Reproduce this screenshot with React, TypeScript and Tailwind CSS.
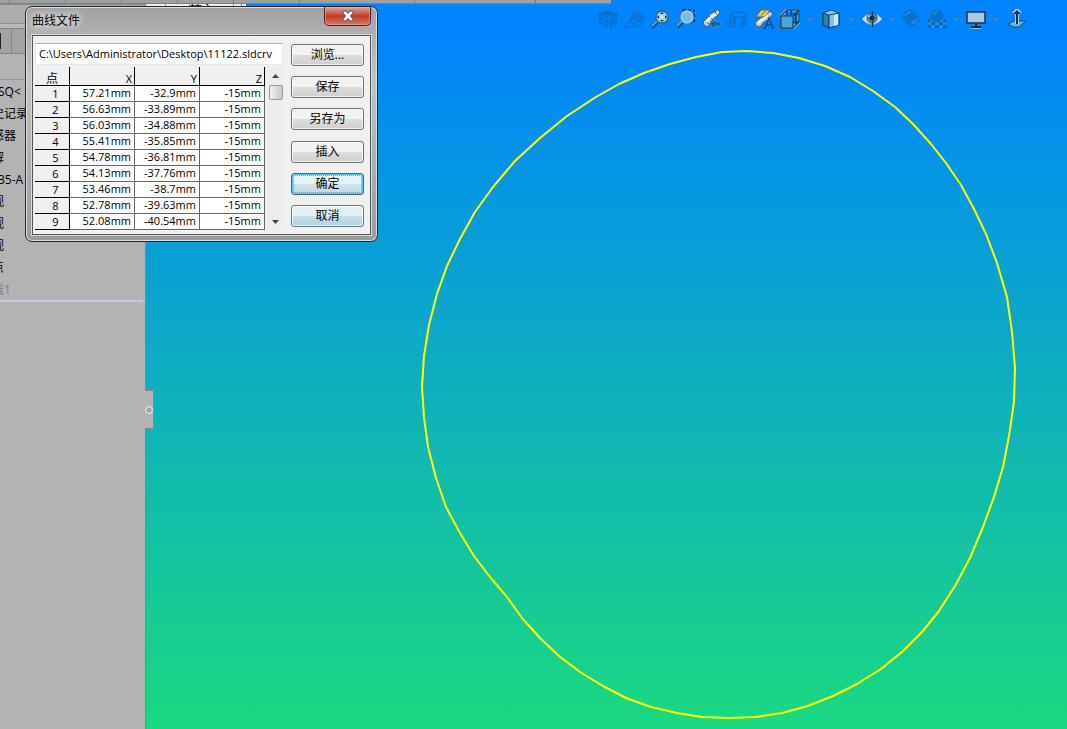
import { ReactNode } from 'react';

const rows = [
  ['57.21mm', '-32.9mm', '-15mm'],
  ['56.63mm', '-33.89mm', '-15mm'],
  ['56.03mm', '-34.88mm', '-15mm'],
  ['55.41mm', '-35.85mm', '-15mm'],
  ['54.78mm', '-36.81mm', '-15mm'],
  ['54.13mm', '-37.76mm', '-15mm'],
  ['53.46mm', '-38.7mm', '-15mm'],
  ['52.78mm', '-39.63mm', '-15mm'],
  ['52.08mm', '-40.54mm', '-15mm'],
];

const treeItems = ['SQ<', '史记录', '感器', '解', '35-A', '视', '视', '视', '点'];

const curve =
  '747,51 773,53 799,58 825,66 850,77 873,91 895,107 913,124 931,144 946,163 961,185 974,209 986,234 997,263 1007,297 1012,332 1015,368 1014,402 1009,436 1003,467 994,497 983,527 970,558 955,586 939,611 922,632 902,652 881,669 857,684 833,696 808,706 782,713 756,717 729,718 702,717 677,713 651,707 626,698 603,686 580,672 559,656 540,638 522,618 507,597 490,577 474,556 460,533 446,507 436,478 428,447 424,417 422,387 424,356 429,325 437,294 447,266 460,239 475,212 493,187 515,161 540,138 567,116 596,97 619,84 644,73 670,64 696,57 722,52';

function Icon({ children }: { children: ReactNode }) {
  return (
    <svg width="20" height="20" viewBox="0 0 20 20" fill="none" stroke="#174e78" strokeWidth="1">
      {children}
    </svg>
  );
}

function Tool({ label, faded, children }: { label: string; faded?: boolean; children: ReactNode }) {
  return (
    <button type="button" aria-label={label} className={faded ? 'size-5 opacity-50' : 'size-5'}>
      <Icon>{children}</Icon>
    </button>
  );
}

function Caret() {
  return (
    <svg width="5" height="3" viewBox="0 0 5 3" className="shrink-0">
      <path d="M0 0h5L2.5 3z" fill="#6b7f95" />
    </svg>
  );
}

function Toolbar() {
  return (
    <div className="flex items-center pt-[5px] pr-10">
      <div className="flex items-center gap-[6px]">
        <Tool label="工作台" faded>
          <path d="M1 5l8-3 10 3-7 4zM1 5v3l11 4 7-4V5M2 9v6h2v-5M7 11v7h2v-6M12 12v6h2v-7M16 10v5h2V8M4 4l11 3M7 3l10 3M5 7l8-4" />
        </Tool>
        <Tool label="测量" faded>
          <path d="M1 15l6-2V8c0-4 4-6 7-5s5 3 5 7l-2 6-6 2H7l-6 1zM7 13l5 3" />
          <circle cx="13" cy="9" r="4" />
          <circle cx="13" cy="9" r="2" />
        </Tool>
        <Tool label="整屏显示">
          <path d="M2 18l5-5" stroke="#164b70" strokeWidth="4" />
          <path d="M2 17l5-5" stroke="#4ba8d5" strokeWidth="2" />
          <circle cx="12" cy="8" r="6" fill="#a7d5ee" stroke="#42617c" strokeWidth="1.5" />
          <path d="M12 3l2 2h-4zM12 13l2-2h-4zM7 8l2-2v4zM17 8l-2-2v4z" fill="#143957" stroke="none" />
          <path d="M12 7v2M11 8h2" stroke="#e9f8ff" />
        </Tool>
        <Tool label="局部放大">
          <path d="M7 1h11v12H7z" stroke="#10283c" strokeDasharray="3 2" strokeWidth="1.5" />
          <path d="M1 18l5-5" stroke="#164b70" strokeWidth="4" />
          <path d="M1 17l5-5" stroke="#4ba8d5" strokeWidth="2" />
          <circle cx="11" cy="8" r="6" fill="#79bce4" stroke="#b5dff4" strokeWidth="1.5" />
          <circle cx="11" cy="8" r="6.5" stroke="#466988" strokeWidth="0.5" />
        </Tool>
        <Tool label="上一视图">
          <path d="M1 13l5-5 2-3 6-3 2-2 2 4-3 3-5 4-4 7-4-2z" fill="#c6d3dc" stroke="#4f5961" />
          <path d="M3 12l5 4M7 7l4 4M13 3l3 4" stroke="#505a62" />
          <path d="M4 13l5-5 5-3" stroke="#f2f5f7" strokeWidth="2" />
          <path d="M8 15l5-5v3h6v4h-6v3z" fill="#12618e" stroke="#5bb5dc" strokeWidth="0.5" />
        </Tool>
        <Tool label="剖面视图" faded>
          <path d="M2 6q2-3 8-3t8 3v9l-4 2V9q-2-2-7-1v9l-5 1zM2 6l5 2M14 9l4-3M2 12l4-4M2 16l5-5M14 13l4-4M14 16l4-4" />
        </Tool>
        <Tool label="动态注解">
          <path d="M7 1h9l-5 7H2z" fill="#d8e47b" stroke="#6d6230" />
          <path d="M4 8l7-6M7 8l6-7" stroke="#c07142" />
          <path d="M1 14l5-5 4-1 6-6 3 3-5 6-4 2-4 5-4-1z" fill="#bccbd5" stroke="#4d5d69" />
          <path d="M4 14l10-8" stroke="#f2f7f9" strokeWidth="2" />
          <path d="M11 19l4-10 4 10M12 16h6M9 19h3M17 19h3" stroke="#154b77" strokeWidth="1.5" />
        </Tool>
        <Tool label="视图定向">
          <path d="M1 7l6-6h12v12l-6 6H1z" stroke="#9dd8f1" strokeWidth="3" />
          <path d="M1 7l6-6h12v12l-6 6H1zM7 1v5M19 1l-6 6M13 13h6M13 5h5M11 1v5M16 4v11" stroke="#173e60" strokeWidth="1.5" />
          <path d="M1 7h12v12H1z" fill="#43a9dc" stroke="#163d5d" />
        </Tool>
      </div>
      <div className="ml-2 flex items-center gap-2">
        <Caret />
        <Tool label="显示样式">
          <path d="M2 4l8-3 8 3v12l-10 3-6-3z" fill="#8acbed" stroke="#244b67" />
          <path d="M2 4l6 2v13l-6-3z" fill="#2684b3" stroke="#183e5b" />
          <path d="M8 6l10-2v12L8 19z" fill="#79c4ee" stroke="#183e5b" />
          <path d="M13 6l4-1v11l-4 1z" fill="#d0e8f5" stroke="none" />
        </Tool>
        <Caret />
        <Tool label="隐藏/显示项目">
          <path d="M0 10C5 3 15 3 20 10 15 17 5 17 0 10z" fill="#c5dcea" stroke="#7ca7c5" />
          <circle cx="10" cy="9" r="5" fill="#5488ac" stroke="#285273" />
          <circle cx="10" cy="9" r="2.5" fill="#142331" stroke="none" />
          <path d="M10.500 2v16" stroke="#1e3446" />
          <path d="M6 7h2" stroke="white" />
        </Tool>
        <Caret />
      </div>
      <div className="ml-[6px] flex items-center gap-[6px]">
        <Tool label="编辑外观" faded>
          <circle cx="9" cy="8" r="7" fill="#0b659f" stroke="#0b659f" />
          <path d="M4 7q2-4 6-4" stroke="#78bae4" />
          <path d="M8 18l1-5 7-6 3 4-7 6zM9 13l3 4M14 9l3 4" fill="#328bc1" />
        </Tool>
        <Tool label="应用布景" faded>
          <path d="M1 9h18v10H1z" fill="#4a9acc" stroke="#2879aa" />
          <path d="M1 10h3v3H1zM4 13h4v3H4zM8 16h4v3H8zM12 13h4v3h-4zM16 10h3v3h-3zM1 16h3v3H1zM16 16h3v3h-3z" fill="#0a4b79" stroke="none" />
          <circle cx="10" cy="7" r="6" fill="#0c629a" stroke="#0c629a" />
          <path d="M6 6q1-3 4-3" stroke="#78bae4" />
        </Tool>
      </div>
      <div className="ml-[6px] flex items-center gap-2">
        <Caret />
        <Tool label="视图设定">
          <path d="M1 3h18v11H1z" fill="#a9c8e2" stroke="#203246" strokeWidth="1.5" />
          <path d="M10 15v3M5 18h10" stroke="#162e43" strokeWidth="2" />
          <path d="M5 19.500h10" stroke="#79c6ef" />
        </Tool>
        <Caret />
        <Tool label="基准面">
          <path d="M1 15l6-3h12l-7 6H6z" fill="#61b7d5" stroke="#164a68" />
          <path d="M10 15V2M7 5l3-4 3 4" stroke="#a7d3f2" strokeWidth="4" />
          <path d="M10 15V3" stroke="#1a3045" strokeWidth="2" />
          <path d="M6 5l4-4 4 4z" fill="#1a3045" stroke="none" />
        </Tool>
      </div>
    </div>
  );
}

function Sidebar() {
  return (
    <aside className="w-[146px] shrink-0 border-r border-[#858585] bg-[#b3b3b3] text-xs text-black">
      <div className="h-5 border-t border-b border-t-[#7a9296] border-b-[#909090] bg-[#adadad]" />
      <div className="h-[5px] border-b border-[#858585] bg-[#b8b8b8]" />
      <div className="flex h-[25px] items-center border-b border-[#858585] bg-[#a3a3a3]">
        <span className="h-4 w-px bg-[#222]" />
        <span className="ml-[10px] h-full w-px bg-[#858585]" />
      </div>
      <div className="h-[26px] border-b border-[#999]" />
      <ul className="pt-px">
        {treeItems.map((item, i) => (
          <li key={i} className="flex h-[22px] items-center overflow-hidden whitespace-nowrap">
            <span className={/^[\x00-\x7f]+$/.test(item) ? '-ml-0.5' : '-ml-2'}>{item}</span>
          </li>
        ))}
        <li className="flex h-[21px] items-center overflow-hidden text-[#7d7d7d]">
          <span className="-ml-2">线1</span>
        </li>
      </ul>
      <div className="mr-0.5 h-0.5 bg-[#c6c6e5]" />
    </aside>
  );
}

const buttonBase = 'h-[22px] w-full rounded-[3px] border text-xs leading-none shadow-[inset_0_0_0_1px_#ffffffb0]';
const plain = `${buttonBase} border-[#707070] bg-linear-to-b from-[#f2f2f2] from-50% via-[#dddddd] via-50% to-[#cfcfcf]`;

function CurveDialog() {
  return (
    <section
      role="dialog"
      aria-labelledby="dialog-title"
      className="absolute top-[6px] left-[25px] w-[353px] rounded-[7px] border border-[#272727] bg-linear-to-b from-[#a2a2a2] via-[#c4c4c4] via-30% to-[#9b9b9b] px-[6px] pb-[6px] text-black shadow-[inset_0_0_0_1px_#dedede]"
    >
      <header className="flex h-7 items-start justify-between">
        <h1 id="dialog-title" className="pt-[6px] text-xs leading-4 [text-shadow:0_0_8px_white,0_0_8px_white]">
          曲线文件
        </h1>
        <button
          type="button"
          aria-label="关闭"
          className="flex h-[19px] w-[47px] items-center justify-center rounded-b-[5px] border border-t-0 border-[#53201b] bg-linear-to-b from-[#e0a79d] via-[#bd3b25] via-50% to-[#d97866] shadow-[inset_0_0_0_1px_#eeb4a580]"
        >
          <svg width="14" height="12" viewBox="0 0 14 12">
            <path d="M2 1h3l2 2.500L9 1h3v2L9.500 6 12 9v2H9L7 8.500 5 11H2V9l2.500-3L2 3z" fill="white" stroke="#514e56" />
          </svg>
        </button>
      </header>
      <div className="flex justify-between border border-[#555] bg-[#f0f0f0] pt-[7px] pr-[6px] pb-1 pl-0.5 outline outline-[#d8d8d8]">
        <div className="w-[248px]">
          <input
            aria-label="文件路径"
            defaultValue="C:\Users\Administrator\Desktop\11122.sldcrv"
            className="block h-[22px] w-full border border-[#e3e9ef] border-t-[#abadb3] bg-white px-[3px] pb-[2px] text-[11px]"
          />
          <div className="mt-0.5 flex justify-between">
            <table className="w-[230px] table-fixed border-separate border-spacing-0 text-[11px] leading-[13px]">
              <thead>
                <tr className="h-[19px] bg-[#f0f0f0]">
                  <th className="w-[35px] border-r border-b border-black p-0 align-bottom text-xs leading-none font-normal">点</th>
                  {['X', 'Y', 'Z'].map((axis) => (
                    <th key={axis} className="border-r border-b border-black p-0 pr-[2px] text-right align-bottom font-normal">
                      {axis}
                    </th>
                  ))}
                </tr>
              </thead>
              <tbody>
                {rows.map((row, i) => (
                  <tr key={i} className="h-4">
                    <th className="border-r border-b border-black bg-[#f0f0f0] p-0 pl-[7px] font-normal">{i + 1}</th>
                    {row.map((value, j) => (
                      <td key={j} className="border-r border-b border-[#666] bg-white p-0 pr-[3px] text-right align-top">
                        {value}
                      </td>
                    ))}
                  </tr>
                ))}
              </tbody>
            </table>
            <div className="flex w-[15px] flex-col items-center justify-between bg-[#ededed]">
              <div className="flex w-full flex-col items-center">
                <button type="button" aria-label="向上滚动" className="flex h-[18px] items-center">
                  <svg width="7" height="4" viewBox="0 0 7 4"><path d="M0 4h7L3.500 0z" fill="#444" /></svg>
                </button>
                <div className="h-[15px] w-[14px] rounded-[2px] border border-[#999] bg-linear-to-r from-[#f2f2f2] to-[#c9c9c9]" />
              </div>
              <button type="button" aria-label="向下滚动" className="flex h-4 items-center">
                <svg width="7" height="4" viewBox="0 0 7 4"><path d="M0 0h7L3.500 4z" fill="#444" /></svg>
              </button>
            </div>
          </div>
        </div>
        <div className="flex w-[73px] flex-col justify-between pt-px pb-[3px]">
          <button type="button" className={plain}>浏览...</button>
          <button type="button" className={plain}>保存</button>
          <button type="button" className={plain}>另存为</button>
          <button type="button" className={plain}>插入</button>
          <button
            type="button"
            className={`${buttonBase} border-[#2e7290] bg-linear-to-b from-[#e9f2f7] from-50% via-[#d0e2ec] via-50% to-[#c0d8e5] p-px ring-1 ring-[#4acbed] ring-inset`}
          >
            <span className="flex h-full items-center justify-center border border-dotted border-[#bd7d70]">确定</span>
          </button>
          <button
            type="button"
            className={`${buttonBase} border-[#587b91] bg-linear-to-b from-[#e5f0f6] from-50% via-[#c8dfeb] via-50% to-[#b3d1e1]`}
          >
            取消
          </button>
        </div>
      </div>
    </section>
  );
}

export default function App() {
  return (
    <div className="relative flex min-h-screen flex-col overflow-hidden bg-linear-to-b/srgb from-[#0084ff] from-4% to-[#1bd980] font-['Open_Sans','Noto_Sans_CJK_SC',sans-serif]">
      <div className="flex h-1 w-[611px] border-b border-[#808080] bg-[#a0a0a0]">
        <span className="w-[10px] border-r border-[#777]" />
        <span className="w-14 border-r border-[#777]" />
        <span className="w-14 border-r border-[#777]" />
        <span className="w-14 border-r border-[#777]" />
        <span className="w-14 border-r border-[#777]" />
        <span className="w-[66px] border-r border-[#777]" />
        <span className="w-[115px] border-r border-[#777]" />
        <span className="w-[121px] border-r border-[#777]" />
      </div>
      <div className="flex flex-1">
        <Sidebar />
        <main className="flex flex-1 flex-col">
          <div className="flex justify-between">
            <div className="flex h-[10px] items-center overflow-hidden bg-[#eee] text-xs">
              <span className="h-full w-5 border-r border-[#888]" />
              <span className="h-full w-6 border-r border-[#888]" />
              <span className="w-11 border-r border-[#888]">插入</span>
              <span className="h-full w-2 border-r border-[#888]" />
              <span className="h-full w-1" />
            </div>
            <Toolbar />
          </div>
          <button
            type="button"
            aria-label="收起面板"
            className="mt-[361px] -ml-px flex h-[39px] w-[9px] items-center border-y border-r border-[#888] bg-[#b3b3b3]"
          >
            <svg width="8" height="8" viewBox="0 0 8 8" fill="none" stroke="#eee">
              <circle cx="4" cy="4" r="3.500" />
              <circle cx="4" cy="4" r="1.500" stroke="#999" />
            </svg>
          </button>
        </main>
      </div>
      <svg viewBox="0 0 1067 729" className="pointer-events-none absolute inset-0 size-full" fill="none">
        <polygon points={curve} stroke="#ffff00" strokeWidth="2" strokeLinejoin="round" />
      </svg>
      <CurveDialog />
    </div>
  );
}
